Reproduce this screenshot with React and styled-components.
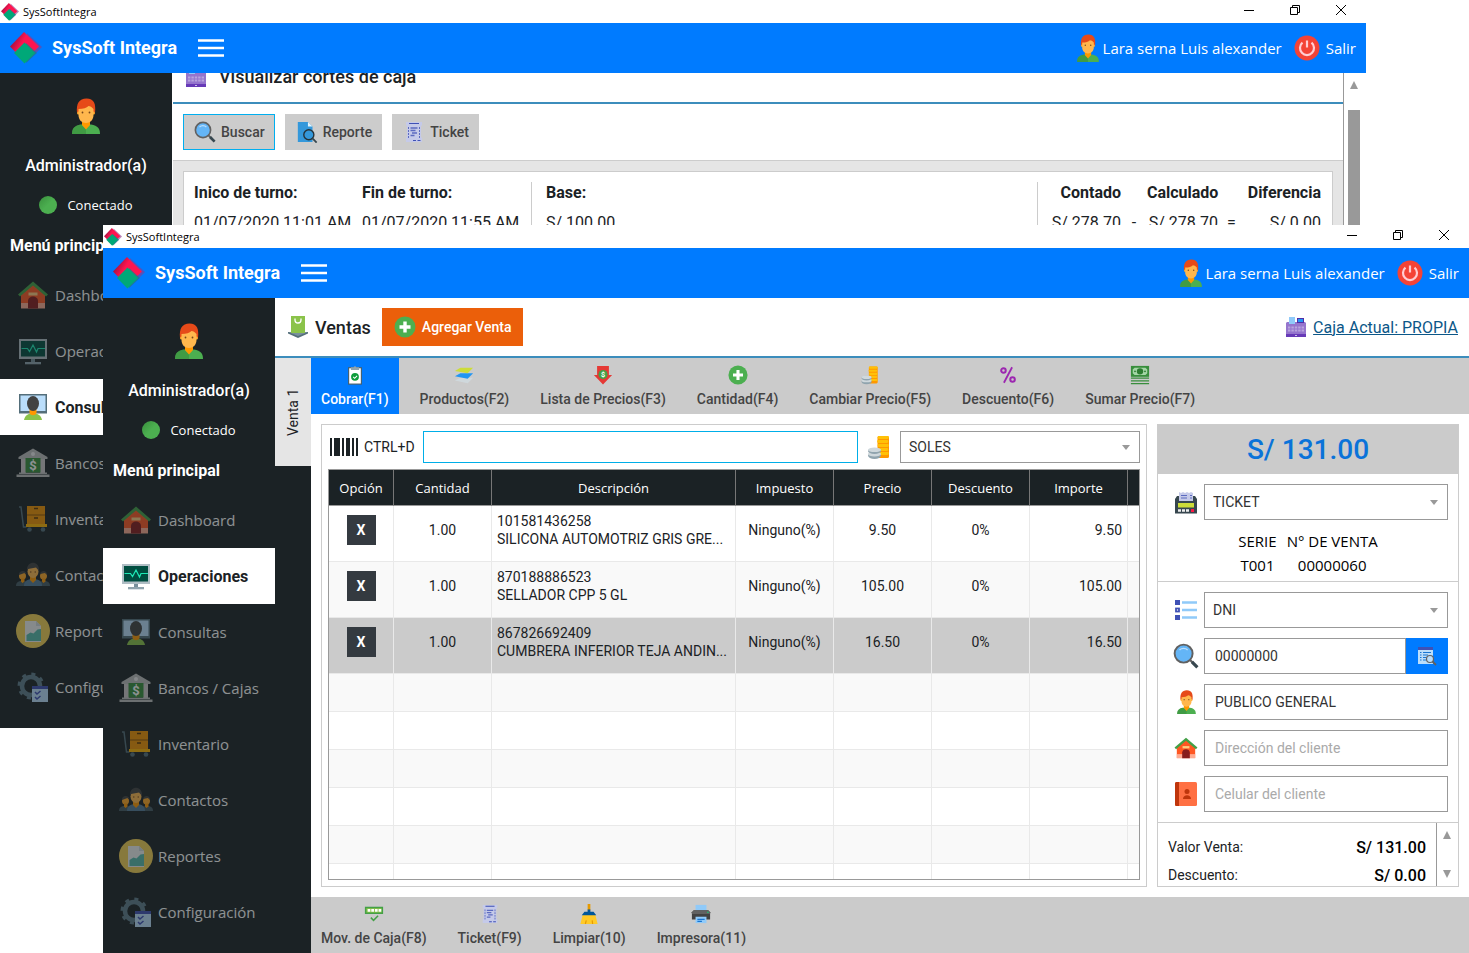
import { useId } from "react";
import styled, { createGlobalStyle } from "styled-components";

const SEGOE = `"Open Sans", "Noto Sans", sans-serif`;
const ROBOTO = `Roboto, "Liberation Sans", sans-serif`;

const products = [
    { code: "101581436258", name: "SILICONA AUTOMOTRIZ GRIS GRE...", qty: "1.00", tax: "Ninguno(%)", price: "9.50", discount: "0%", total: "9.50" },
    { code: "870188886523", name: "SELLADOR CPP 5 GL", qty: "1.00", tax: "Ninguno(%)", price: "105.00", discount: "0%", total: "105.00" },
    { code: "867826692409", name: "CUMBRERA INFERIOR TEJA ANDIN...", qty: "1.00", tax: "Ninguno(%)", price: "16.50", discount: "0%", total: "16.50", selected: true },
];

const emptyRows = [0, 1, 2, 3, 4, 5];

const menu = [
    { label: "Dashboard", icon: HouseIcon },
    { label: "Operaciones", icon: MonitorIcon },
    { label: "Consultas", icon: PresenterIcon },
    { label: "Bancos / Cajas", icon: BankIcon },
    { label: "Inventario", icon: TrolleyIcon },
    { label: "Contactos", icon: PeopleIcon },
    { label: "Reportes", icon: ReportsIcon },
    { label: "Configuración", icon: SettingsIcon },
];

const topTools = [
    { label: "Cobrar(F1)", icon: ClipboardIcon, primary: true },
    { label: "Productos(F2)", icon: LayersIcon },
    { label: "Lista de Precios(F3)", icon: PriceDownIcon },
    { label: "Cantidad(F4)", icon: PlusIcon },
    { label: "Cambiar Precio(F5)", icon: CoinsIcon },
    { label: "Descuento(F6)", icon: PercentIcon },
    { label: "Sumar Precio(F7)", icon: CashIcon },
];

const bottomTools = [
    { label: "Mov. de Caja(F8)", icon: PinIcon },
    { label: "Ticket(F9)", icon: TicketIcon },
    { label: "Limpiar(10)", icon: BroomIcon },
    { label: "Impresora(11)", icon: PrinterIcon },
];

export default function App() {
    return (
        <Desktop>
            <GlobalStyle />
            <BackWindow>
                <WindowTop />
                <WindowBody>
                    <Sidebar active="Consultas" />
                    <CashCuts />
                </WindowBody>
            </BackWindow>
            <FrontWindow>
                <WindowTop />
                <WindowBody>
                    <Sidebar active="Operaciones" />
                    <Sales />
                </WindowBody>
            </FrontWindow>
        </Desktop>
    );
}

function WindowTop() {
    return (
        <>
            <TitleBar>
                <Logo size={18} />
                <span>SysSoftIntegra</span>
                <WindowButtons>
                    <button aria-label="Minimizar">
                        <svg width="10" height="10"><path d="M0 5.5h10" stroke="#000" /></svg>
                    </button>
                    <button aria-label="Restaurar">
                        <svg width="10" height="10" fill="none" stroke="#000"><path d="M.5 2.5h7v7h-7zM2.5 2.5v-2h7v7h-2" /></svg>
                    </button>
                    <button aria-label="Cerrar">
                        <svg width="10" height="10"><path d="M0 0l10 10M10 0L0 10" stroke="#000" /></svg>
                    </button>
                </WindowButtons>
            </TitleBar>
            <Header>
                <Logo size={32} />
                <Brand>SysSoft Integra</Brand>
                <MenuToggle aria-label="Menú">
                    <svg width="26" height="20"><path d="M0 2.5h26M0 10h26M0 17.5h26" stroke="#fff" strokeWidth="2.4" /></svg>
                </MenuToggle>
                <Session>
                    <PersonIcon size={28} />
                    <span>Lara serna Luis alexander</span>
                    <button>
                        <PowerIcon size={26} />
                        Salir
                    </button>
                </Session>
            </Header>
        </>
    );
}

function Sidebar({ active }) {
    return (
        <SideMenu>
            <Avatar>
                <PersonIcon size={36} />
            </Avatar>
            <Role>Administrador(a)</Role>
            <Status>
                <Dot />
                Conectado
            </Status>
            <MenuTitle>Menú principal</MenuTitle>
            {menu.map(({ label, icon: MenuIcon }) => (
                <MenuItem key={label} href="#" $active={label === active}>
                    <MenuIcon size={34} />
                    {label}
                </MenuItem>
            ))}
        </SideMenu>
    );
}

function CashCuts() {
    return (
        <ScrollArea>
            <CutsContent>
                <CutsTitle>
                    <RegisterIcon size={20} />
                    Visualizar cortes de caja
                </CutsTitle>
                <CutsButtons>
                    <GrayButton $focused><SearchIcon size={22} />Buscar</GrayButton>
                    <GrayButton><ReportSearchIcon size={22} />Reporte</GrayButton>
                    <GrayButton><TicketIcon size={22} />Ticket</GrayButton>
                </CutsButtons>
                <CutsBody>
                    <CutsCard>
                        <Shift>
                            <strong>Inico de turno:</strong>
                            <strong>Fin de turno:</strong>
                            <span>01/07/2020 11:01 AM</span>
                            <span>01/07/2020 11:55 AM</span>
                        </Shift>
                        <Base>
                            <strong>Base:</strong>
                            <span>S/ 100.00</span>
                        </Base>
                        <Totals>
                            <strong>Contado</strong>
                            <i />
                            <strong>Calculado</strong>
                            <i />
                            <strong>Diferencia</strong>
                            <span>S/ 278.70</span>
                            <i>-</i>
                            <span>S/ 278.70</span>
                            <i>=</i>
                            <span>S/ 0.00</span>
                        </Totals>
                    </CutsCard>
                </CutsBody>
            </CutsContent>
            <ScrollBar>
                <Arrow />
                <Thumb />
            </ScrollBar>
        </ScrollArea>
    );
}

function Sales() {
    return (
        <SalesPage>
            <SalesHeader>
                <BagIcon size={22} />
                <h1>Ventas</h1>
                <AddSale><PlusIcon size={22} />Agregar Venta</AddSale>
                <CashLink href="#">
                    <RegisterIcon size={20} />
                    <span>Caja Actual: PROPIA</span>
                </CashLink>
            </SalesHeader>
            <SalesBody>
                <TabStrip>
                    <Tab>Venta 1</Tab>
                </TabStrip>
                <SaleTab>
                    <Toolbar items={topTools} />
                    <Panels>
                        <ProductPanel />
                        <PayPanel />
                    </Panels>
                    <Toolbar items={bottomTools} />
                </SaleTab>
            </SalesBody>
        </SalesPage>
    );
}

function Toolbar({ items }) {
    return (
        <ToolRow>
            {items.map(({ label, icon: ToolIcon, primary }) => (
                <Tool key={label} $primary={primary}>
                    <ToolIcon size={20} />
                    {label}
                </Tool>
            ))}
        </ToolRow>
    );
}

function ProductPanel() {
    return (
        <ProductBox>
            <SearchRow>
                <BarcodeIcon />
                <label htmlFor="code">CTRL+D</label>
                <CodeInput id="code" />
                <CoinsIcon size={26} />
                <Money>
                    <select aria-label="Moneda"><option>SOLES</option></select>
                </Money>
            </SearchRow>
            <TableFrame>
                <Table>
                    <colgroup>
                        <col width="65" />
                        <col width="98" />
                        <col />
                        <col width="98" />
                        <col width="98" />
                        <col width="98" />
                        <col width="98" />
                        <col width="11" />
                    </colgroup>
                    <thead>
                        <tr>
                            <th>Opción</th>
                            <th>Cantidad</th>
                            <th>Descripción</th>
                            <th>Impuesto</th>
                            <th>Precio</th>
                            <th>Descuento</th>
                            <th>Importe</th>
                            <th />
                        </tr>
                    </thead>
                    <tbody>
                        {products.map((p) => (
                            <Row key={p.code} $selected={p.selected}>
                                <td><Remove>X</Remove></td>
                                <td>{p.qty}</td>
                                <NameCell>{p.code}<br />{p.name}</NameCell>
                                <td>{p.tax}</td>
                                <td>{p.price}</td>
                                <td>{p.discount}</td>
                                <TotalCell>{p.total}</TotalCell>
                                <td />
                            </Row>
                        ))}
                        {emptyRows.map((n) => (
                            <EmptyRow key={n}>
                                <td /><td /><td /><td /><td /><td /><td /><td />
                            </EmptyRow>
                        ))}
                    </tbody>
                </Table>
            </TableFrame>
        </ProductBox>
    );
}

function PayPanel() {
    return (
        <PayBox>
            <Amount>S/ 131.00</Amount>
            <Section>
                <Field>
                    <ReceiptPrinterIcon size={24} />
                    <SelectBox>
                        <select aria-label="Comprobante"><option>TICKET</option></select>
                    </SelectBox>
                </Field>
                <Serie>
                    <span>SERIE</span>
                    <span>N° DE VENTA</span>
                    <span>T001</span>
                    <span>00000060</span>
                </Serie>
            </Section>
            <Section>
                <Field>
                    <ListIcon size={24} />
                    <SelectBox>
                        <select aria-label="Tipo de documento"><option>DNI</option></select>
                    </SelectBox>
                </Field>
                <Field>
                    <SearchIcon size={26} />
                    <InputGroup>
                        <TextInput aria-label="Número de documento" defaultValue="00000000" />
                        <LookupButton aria-label="Buscar cliente"><ListSearchIcon size={20} /></LookupButton>
                    </InputGroup>
                </Field>
                <Field>
                    <PersonIcon size={24} />
                    <TextInput aria-label="Nombre del cliente" defaultValue="PUBLICO GENERAL" />
                </Field>
                <Field>
                    <HouseIcon size={26} />
                    <TextInput aria-label="Dirección" placeholder="Dirección del cliente" />
                </Field>
                <Field>
                    <AgendaIcon size={24} />
                    <TextInput aria-label="Celular" placeholder="Celular del cliente" />
                </Field>
            </Section>
            <Summary>
                <SummaryList>
                    <dt>Valor Venta:</dt>
                    <dd>S/ 131.00</dd>
                    <dt>Descuento:</dt>
                    <dd>S/ 0.00</dd>
                </SummaryList>
                <SummaryScroll>
                    <Arrow />
                    <Arrow $down />
                </SummaryScroll>
            </Summary>
        </PayBox>
    );
}

/* icons */

function Logo({ size }) {
    const id = useId();
    return (
        <Icon width={size} height={size} viewBox="0 0 32 32">
            <defs>
                <linearGradient id={id} x1="0" y1="0.3" x2="0.7" y2="0.7">
                    <stop offset="0" stopColor="#8e0f3c" />
                    <stop offset="0.5" stopColor="#ff1550" />
                </linearGradient>
            </defs>
            <path d="M17 1l15 14-15 15z" fill="#8a3a8c" opacity=".6" />
            <path d="M14 0l15 14.500-15 14.500L0 14.500z" fill={`url(#${id})`} />
            <path d="M16 11l11 10-11 10z" fill="#0f7f92" opacity=".7" />
            <path d="M14.500 10.500L25 21 14.500 31.500 4 21z" fill="#00a878" />
        </Icon>
    );
}

function PersonIcon({ size }) {
    return (
        <Icon width={Math.round(size * 0.78)} height={size} viewBox="0 0 28 36">
            <path d="M0 36c0-5 2-8.500 9-9.500h10c7 1 9 4.500 9 9.500z" fill="#4caf50" />
            <path d="M0 36c0-5 2-8.500 9-9.500l5 5V36z" fill="#388e3c" opacity=".6" />
            <path d="M10 21h8v6l-4 4.500-4-4.500z" fill="#ff9800" />
            <path d="M5 14.500C4 6 7 .5 14.500.5S24 6 23 14.500z" fill="#e64a19" />
            <circle cx="6.500" cy="15" r="1.500" fill="#ffa726" />
            <circle cx="21.500" cy="15" r="1.500" fill="#ffa726" />
            <path d="M6.500 11c5 0 8-1 10-3 2 0 3 1 5 3v6c0 5-3.500 8-7.500 8s-7.500-3-7.500-8z" fill="#ffb74d" />
            <circle cx="10.500" cy="14.500" r=".9" fill="#784719" />
            <circle cx="17.500" cy="14.500" r=".9" fill="#784719" />
        </Icon>
    );
}

function PowerIcon({ size }) {
    return (
        <Icon width={size} height={size} viewBox="0 0 26 26">
            <circle cx="13" cy="13" r="12.5" fill="#f44336" />
            <path d="M8.500 7.700a7 7 0 1 0 9 0M13 5.500v7" fill="none" stroke="#ffcdd2" strokeWidth="2.2" />
        </Icon>
    );
}

function HouseIcon({ size }) {
    return (
        <Icon width={size} height={size} viewBox="0 0 34 34">
            <path d="M5 16L17 6l12 10v14H5z" fill="#ff5722" />
            <path d="M5 25h24v5.500H5z" fill="#ffab91" />
            <path d="M17 3.500L2 16.500l2 2 13-11 13 11 2-2z" fill="#43a047" />
            <path d="M12 30.500V23c0-6 10-6 10 0v7.500z" fill="#871c1c" />
            <rect x="12.500" y="14.500" width="9" height="3" fill="#ffcc80" />
        </Icon>
    );
}

function MonitorIcon({ size }) {
    return (
        <Icon width={size} height={size} viewBox="0 0 34 34">
            <path d="M15 24h4v5h-4z" fill="#78909c" />
            <rect x="9" y="28" width="16" height="2.3" fill="#90a4ae" />
            <rect x="3" y="5" width="28" height="20" fill="#b0bec5" />
            <rect x="5" y="7" width="24" height="15.5" fill="#004d40" />
            <path d="M5.500 14.500h6l2 3 3.500-6.500 3.500 7 1.500-3.500h7" fill="none" stroke="#1de9b6" strokeWidth="1.2" />
        </Icon>
    );
}

function PresenterIcon({ size }) {
    return (
        <Icon width={size} height={size} viewBox="0 0 34 34">
            <rect x="3" y="4" width="28" height="19.5" fill="#546e7a" />
            <rect x="4.500" y="5.500" width="25" height="15.5" fill="#bbdefb" />
            <path d="M8 30c1-5 4-6.500 9-6.500s8 1.500 9 6.500z" fill="#8bc34a" />
            <path d="M13.500 19h7v4c-1 3-6 3-7 0z" fill="#ff9800" />
            <ellipse cx="17" cy="13.5" rx="6" ry="7.500" fill="#424242" />
        </Icon>
    );
}

function BankIcon({ size }) {
    return (
        <Icon width={size} height={size} viewBox="0 0 34 34">
            <path d="M17 2.500L31.500 11v2h-29v-2z" fill="#bdbdbd" />
            <circle cx="17" cy="8" r="2" fill="#eee" />
            <path d="M5 13h5v14H5zM24 13h5v14h-5z" fill="#cfcaca" />
            <path d="M3 26.500h28V28H3zM.5 28.500h33V31H.5z" fill="#bdbdbd" />
            <rect x="9.500" y="12" width="15" height="14.5" fill="#388e3c" />
            <text x="17" y="24" textAnchor="middle" fontSize="13" fontWeight="700" fontFamily="Roboto" fill="#fff">$</text>
        </Icon>
    );
}

function TrolleyIcon({ size }) {
    return (
        <Icon width={size} height={size} viewBox="0 0 34 34">
            <path d="M3 5h2l2.500 20h3" fill="none" stroke="#546e7a" strokeWidth="1.5" />
            <rect x="11" y="4" width="18" height="18" fill="#f09200" />
            <path d="M11 13h18" stroke="#8d5300" />
            <path d="M18 6.500h4M18 16h4" stroke="#5d3700" strokeWidth="1.5" />
            <rect x="10" y="22" width="21" height="3" fill="#ffb300" />
            <circle cx="13.500" cy="27.500" r="2.300" fill="#546e7a" />
            <circle cx="27" cy="27.500" r="2.300" fill="#546e7a" />
        </Icon>
    );
}

function PeopleIcon({ size }) {
    return (
        <Icon width={size} height={size} viewBox="0 0 34 34">
            <path d="M0 28c0-3.500 2-5 6-5s5 2 5 5zM23 28c0-3 1-5 5-5s6 1.500 6 5z" fill="#455a64" />
            <path d="M8 28c0-5 3-7 9-7s9 2 9 7z" fill="#547b98" />
            <circle cx="6.500" cy="18" r="3.500" fill="#ffa726" />
            <circle cx="27.500" cy="18" r="3.500" fill="#ffa726" />
            <path d="M3 17c-.5-5 7-5 7.500-1l-2-1zM24 16c.5-4 7.500-4 7 1l-2-2z" fill="#424242" />
            <path d="M5 20.500h3.500v3L6.500 25 5 23.500zM26 20.500h3.500v3L27.500 25 26 23.500z" fill="#ff9800" />
            <path d="M14 18h6v4l-3 3-3-3z" fill="#ff9800" />
            <ellipse cx="17" cy="13.500" rx="5.500" ry="6.500" fill="#ffb74d" />
            <path d="M11 13c-1-11 13-11 12 0l-3-3.500-8 1.500z" fill="#424242" />
            <circle cx="14.800" cy="14" r=".7" fill="#784719" />
            <circle cx="19.200" cy="14" r=".7" fill="#784719" />
        </Icon>
    );
}

function ReportsIcon({ size }) {
    return (
        <Icon width={size} height={size} viewBox="0 0 34 34">
            <circle cx="17" cy="17" r="17" fill="#f3cf53" />
            <path d="M9 7h11l5 5v16H9z" fill="#f1f1f1" />
            <path d="M20 7l5 5h-5z" fill="#cfd8dc" />
            <path d="M10.500 21l4-2.500 3 1 4-4 3.500-.5v12H10.500z" fill="#57b9ab" />
        </Icon>
    );
}

function SettingsIcon({ size }) {
    return (
        <Icon width={size} height={size} viewBox="0 0 34 34">
            <circle cx="15" cy="16" r="9" fill="none" stroke="#607d8b" strokeWidth="4.5" />
            <circle cx="15" cy="16" r="12" fill="none" stroke="#607d8b" strokeWidth="3" strokeDasharray="4 5.42" />
            <rect x="16" y="17" width="16" height="15" fill="#bbdefb" />
            <rect x="16" y="16" width="16" height="3" fill="#3f51b5" />
            <path d="M19 22l2 2 3.500-3M19 27l2 2 3.500-3" fill="none" stroke="#3f51b5" strokeWidth="1.5" />
        </Icon>
    );
}

function RegisterIcon({ size }) {
    return (
        <Icon width={size} height={size} viewBox="0 0 20 20">
            <path d="M0 6l1-1h18l1 1v11H0z" fill="#9575cd" />
            <rect x="3" width="6" height="7" fill="#90caf9" />
            <rect x="11" y="1" width="7" height="5" fill="#512da8" />
            <rect x="12" y="2" width="5" height="3" fill="#2196f3" />
            <path d="M2 10.500h16M2 13.500h16" stroke="#b9a5de" strokeWidth="2" strokeDasharray="2.4 1" />
            <rect y="17" width="20" height="3" fill="#673ab7" />
            <rect x="9" y="18" width="2" height="1" fill="#d1c4e9" />
        </Icon>
    );
}

function BagIcon({ size }) {
    return (
        <Icon width={size} height={size} viewBox="0 0 22 22">
            <path d="M1 16h20v1.500L11 22 1 17.500z" fill="#546e7a" />
            <path d="M1 16h20l-10 4z" fill="#78909c" />
            <rect x="4" width="14" height="17" fill="#8bc34a" />
            <path d="M8 2.500V4c0 4 6 4 6 0V2.500" fill="none" stroke="#fff" strokeWidth="1.3" />
        </Icon>
    );
}

function PlusIcon({ size }) {
    return (
        <Icon width={size} height={size} viewBox="0 0 22 22">
            <circle cx="11" cy="11" r="10.5" fill="#4caf50" />
            <path d="M11 5.500v11M5.500 11h11" stroke="#fff" strokeWidth="3.4" />
        </Icon>
    );
}

function SearchIcon({ size }) {
    return (
        <Icon width={size} height={size} viewBox="0 0 24 24">
            <path d="M15.500 15.500l3 3" stroke="#616161" strokeWidth="2" />
            <path d="M17.500 17.500l5 5" stroke="#37474f" strokeWidth="3" />
            <circle cx="9.800" cy="9.800" r="8.300" fill="#64b5f6" stroke="#616161" strokeWidth="1.8" />
            <path d="M6 6.500c2-2 5.500-2 7.500 0" fill="none" stroke="#bbdefb" strokeWidth="1.3" />
        </Icon>
    );
}

function ReportSearchIcon({ size }) {
    return (
        <Icon width={size} height={size} viewBox="0 0 22 24">
            <path d="M1 1h11l5 5v17H1z" fill="#3498db" />
            <path d="M12 1l5 5h-5z" fill="#e1f5fe" />
            <circle cx="13" cy="15" r="5.500" fill="#3498db" stroke="#263238" strokeWidth="1.5" />
            <path d="M17 19l4.500 4.500" stroke="#37474f" strokeWidth="2" />
        </Icon>
    );
}

function TicketIcon({ size }) {
    return (
        <Icon width={size} height={size} viewBox="0 0 22 22">
            <path d="M3 1h16v3l-1 1v11l1 1v4H3v-4l1-1V5L3 4z" fill="#c5cae9" />
            <path d="M6 2.500h10M10 19.500h3M14.500 19.500h3" stroke="#3f51b5" strokeWidth="1.2" />
            <path d="M5.500 6v11M16.500 6v11" stroke="#5c6bc0" strokeDasharray="2 1" />
            <path d="M7.500 7h7M7.500 9.500h5M9 12h5M7.500 14.500h4" stroke="#5c6bc0" strokeWidth="1.5" />
        </Icon>
    );
}

function ClipboardIcon({ size }) {
    return (
        <Icon width={size} height={size} viewBox="0 0 22 22">
            <rect x="4" y="3" width="14" height="18" fill="#fff" stroke="#455a64" strokeWidth="1.2" />
            <path d="M6.500 2.500h3a1.600 1.600 0 0 1 3 0h3v3h-9z" fill="#90a4ae" />
            <circle cx="11" cy="13" r="4.300" fill="#0f9d3c" />
            <path d="M9 13l1.600 1.600L13.300 12" fill="none" stroke="#fff" strokeWidth="1.2" />
        </Icon>
    );
}

function LayersIcon({ size }) {
    return (
        <Icon width={size} height={size} viewBox="0 0 22 22">
            <path d="M1 17l6-3h14l-6 6z" fill="#cfd8dc" />
            <path d="M1 12.500l6-3.500h14l-6 6z" fill="#2196f3" />
            <path d="M1 6.500L7 3h14l-6 6z" fill="#cddc39" />
        </Icon>
    );
}

function PriceDownIcon({ size }) {
    return (
        <Icon width={size} height={size} viewBox="0 0 22 22">
            <path d="M4.500 1h13v10H21L11 21.500 1 11h3.500z" fill="#e53935" />
            <circle cx="11" cy="10.500" r="5" fill="#43a047" />
            <text x="11" y="13.500" textAnchor="middle" fontSize="8" fontFamily="Roboto" fontWeight="700" fill="#fff">$</text>
        </Icon>
    );
}

function CoinsIcon({ size }) {
    return (
        <Icon width={size} height={size} viewBox="0 0 26 26">
            <rect x="11.500" y="2" width="11.500" height="22" rx="1.500" fill="#ff9800" />
            <path d="M13 3.500h8.500M12.500 7.500h8.500M13 11.500h8.500M12.500 15.500h8.500M13 19.500h8.500" stroke="#ffc107" strokeWidth="2.800" strokeLinecap="round" />
            <ellipse cx="8.500" cy="21.500" rx="6.500" ry="3.500" fill="#90a4ae" />
            <ellipse cx="8.500" cy="20" rx="6.500" ry="2.500" fill="#cfd8dc" />
            <ellipse cx="8.500" cy="17" rx="6.500" ry="3" fill="#90a4ae" />
            <ellipse cx="8.500" cy="15.800" rx="6.500" ry="2.300" fill="#cfd8dc" />
        </Icon>
    );
}

function PercentIcon({ size }) {
    return (
        <Icon width={size} height={size} viewBox="0 0 22 22">
            <path d="M15.500 2.500l-9 17" stroke="#9c27b0" strokeWidth="2" />
            <circle cx="6" cy="6" r="2.500" fill="none" stroke="#9c27b0" strokeWidth="2.200" />
            <circle cx="16" cy="16" r="2.500" fill="none" stroke="#9c27b0" strokeWidth="2.200" />
        </Icon>
    );
}

function CashIcon({ size }) {
    return (
        <Icon width={size} height={size} viewBox="0 0 22 22">
            <rect x="1" y="1" width="20" height="12" fill="#388e3c" />
            <path d="M5 3h12l2 2v4l-2 2H5L3 9V5z" fill="#a5d6a7" />
            <circle cx="11" cy="7" r="3.500" fill="#2e7d32" />
            <circle cx="5.500" cy="7" r="1" fill="#2e7d32" />
            <circle cx="16.500" cy="7" r="1" fill="#2e7d32" />
            <path d="M1 14.500h20M1 17.500h20M1 20.500h20" stroke="#388e3c" strokeWidth="1.5" />
        </Icon>
    );
}

function PinIcon({ size }) {
    return (
        <Icon width={size} height={size} viewBox="0 0 22 22">
            <rect x="1.800" y="3.800" width="18.400" height="6.400" fill="#8bc34a" stroke="#43a047" strokeWidth="1.6" />
            <path d="M4 7h15" stroke="#fff" strokeWidth="3" strokeDasharray="3 1" />
            <path d="M7.500 15l3 3 5-5" fill="none" stroke="#43a047" strokeWidth="1.6" />
        </Icon>
    );
}

function BroomIcon({ size }) {
    return (
        <Icon width={size} height={size} viewBox="0 0 22 22">
            <path d="M9.500 0h3v7h-3z" fill="#e69a00" />
            <path d="M9.500 6h3v4h-3z" fill="#01579b" />
            <path d="M4 12h14l2.500 10h-19z" fill="#ffca28" />
            <path d="M6 8.500h10l3 4H3z" fill="#01579b" />
            <path d="M7 22l1-4M15 22l-.5-4" stroke="#e69a00" strokeWidth="1.3" />
        </Icon>
    );
}

function PrinterIcon({ size }) {
    return (
        <Icon width={size} height={size} viewBox="0 0 22 22">
            <rect x="5" y="1" width="12" height="7" fill="#90caf9" />
            <path d="M1 9l2-2h16l2 2v8H1z" fill="#424242" />
            <path d="M1 9l2-2h16l2 2v2H1z" fill="#616161" />
            <rect x="18" y="8.500" width="1.300" height="1.300" fill="#00e676" />
            <rect x="5" y="14" width="12" height="7" fill="#90caf9" />
            <path d="M7 17h8M7 19.200h5" stroke="#1976d2" strokeWidth="1.3" />
        </Icon>
    );
}

function ReceiptPrinterIcon({ size }) {
    return (
        <Icon width={size} height={size} viewBox="0 0 24 24">
            <path d="M1 9l2-3h18l2 3v14.500H1z" fill="#37474f" />
            <path d="M5 2l2 1 2-1 2 1 2-1 2 1 2-1 2 1v8H5z" fill="#c5cae9" />
            <path d="M7 5.500h6M16 5.500h2M7 8h6M16 8h2" stroke="#5c6bc0" strokeWidth="1.2" />
            <rect x="4" y="13" width="16" height="4.500" fill="#cddc39" />
            <path d="M4 20.500h11.500" stroke="#eee" strokeWidth="2.4" strokeDasharray="3 1" />
            <rect x="17" y="19" width="3" height="3" fill="#ff1744" />
        </Icon>
    );
}

function ListIcon({ size }) {
    return (
        <Icon width={size} height={size} viewBox="0 0 24 24">
            <path d="M1 2h5v5H1zM1 17h5v5H1z" fill="#3f51b5" />
            <rect x="2" y="10.500" width="3" height="3" fill="#fff" stroke="#3f51b5" strokeWidth="1.8" />
            <path d="M8 4.500h15M8 12h15M8 19.500h15" stroke="#90caf9" strokeWidth="2.4" />
        </Icon>
    );
}

function AgendaIcon({ size }) {
    return (
        <Icon width={size} height={size} viewBox="0 0 24 24">
            <rect x="1" width="22" height="24" rx="1.5" fill="#ff7043" />
            <path d="M5 0v24H2.500A1.500 1.500 0 0 1 1 22.500v-21A1.500 1.500 0 0 1 2.500 0z" fill="#bf360c" />
            <circle cx="13" cy="9.500" r="2.500" fill="#bf360c" />
            <path d="M9 17c0-5 8-5 8 0z" fill="#bf360c" />
        </Icon>
    );
}

function ListSearchIcon({ size }) {
    return (
        <Icon width={size} height={size} viewBox="0 0 20 20">
            <rect x="1" y="1" width="15" height="17" fill="#bbdefb" />
            <rect x="1" y="1" width="15" height="3" fill="#3f51b5" />
            <path d="M3 6.500h1.500M3 9h1.500M3 11.500h1.500M3 14h1.500M6 6.500h8M6 9h5M6 11.500h3M6 14h3" stroke="#1976d2" strokeWidth="1.2" />
            <path d="M15.500 15.500l3.500 3.500" stroke="#616161" strokeWidth="1.8" />
            <circle cx="13" cy="13" r="3.500" fill="#bbdefb" stroke="#616161" strokeWidth="1.2" />
        </Icon>
    );
}

function BarcodeIcon() {
    return (
        <Icon width="28" height="18" viewBox="0 0 28 18">
            <path d="M0 0h2v18H0zM4 0h6v18H4zM12 0h2v18h-2zM16 0h4v18h-4zM22 0h2v18h-2zM26 0h2v18h-2z" fill="#1b2225" />
        </Icon>
    );
}

/* styles */

const GlobalStyle = createGlobalStyle`
    * {
        box-sizing: border-box;
    }
    body {
        margin: 0;
        background-color: #fff;
        color: #1b2225;
        font-family: ${ROBOTO};
        font-size: 14px;
    }
    button, input, select {
        margin: 0;
        border: none;
        border-radius: 0;
        font: inherit;
        color: inherit;
    }
    button {
        padding: 0;
        background: none;
        cursor: pointer;
    }
    a {
        color: inherit;
        text-decoration: none;
    }
    h1, h2, dl, dd {
        margin: 0;
    }
`;

const Icon = styled.svg`
    display: block;
    flex-shrink: 0;
`;

const Desktop = styled.div`
    position: relative;
    height: 100vh;
    min-height: 900px;
    overflow: hidden;
`;

const Window = styled.section`
    position: absolute;
    display: flex;
    flex-direction: column;
    background-color: #fff;
    overflow: hidden;
`;

const BackWindow = styled(Window)`
    inset: 0 103px 225px 0;
`;

const FrontWindow = styled(Window)`
    inset: 225px 0 0 103px;
`;

const TitleBar = styled.div`
    height: 23px;
    flex-shrink: 0;
    display: flex;
    align-items: center;
    gap: 4px;
    padding: 0 2px 0 1px;
    font-family: ${SEGOE};
    font-size: 11px;
    color: #000;
`;

const WindowButtons = styled.div`
    display: flex;
    margin-left: auto;
    align-self: flex-start;
    button {
        width: 46px;
        height: 20px;
        display: flex;
        align-items: center;
        justify-content: center;
    }
`;

const Header = styled.header`
    height: 50px;
    flex-shrink: 0;
    display: flex;
    align-items: center;
    padding: 0 10px;
    background-color: #007bff;
    color: #fff;
`;

const Brand = styled.h1`
    margin-left: 10px;
    font-size: 18px;
    font-weight: 700;
    line-height: 22px;
`;

const MenuToggle = styled.button`
    display: flex;
    margin-left: 21px;
`;

const Session = styled.div`
    margin-left: auto;
    display: flex;
    align-items: center;
    gap: 4px;
    font-family: ${SEGOE};
    font-size: 15px;
    button {
        display: flex;
        align-items: center;
        gap: 6px;
        margin-left: 8px;
    }
`;

const WindowBody = styled.div`
    flex: 1;
    min-height: 0;
    display: flex;
`;

const SideMenu = styled.nav`
    width: 172px;
    flex-shrink: 0;
    overflow: hidden;
    background-color: #1b2225;
    color: #fff;
`;

const Avatar = styled.div`
    display: flex;
    justify-content: center;
    padding: 25px 0 11px;
`;

const Role = styled.div`
    line-height: 42px;
    text-align: center;
    font-size: 16px;
    font-weight: 500;
`;

const Status = styled.div`
    height: 36px;
    display: flex;
    align-items: center;
    justify-content: center;
    gap: 10px;
    font-family: ${SEGOE};
    font-size: 13px;
`;

const Dot = styled.span`
    width: 18px;
    height: 18px;
    border-radius: 50%;
    background: linear-gradient(135deg, #388e3c, #4caf50 50%);
`;

const MenuTitle = styled.h2`
    padding: 2px 0 0 10px;
    line-height: 42px;
    font-size: 16px;
    font-weight: 700;
`;

const MenuItem = styled.a`
    height: 56px;
    display: flex;
    align-items: center;
    gap: 5px;
    padding-left: 16px;
    font-family: ${(props) => (props.$active ? ROBOTO : SEGOE)};
    font-size: ${(props) => (props.$active ? "16px" : "15px")};
    font-weight: ${(props) => (props.$active ? 700 : 400)};
    color: ${(props) => (props.$active ? "#1b2225" : "#fff")};
    background-color: ${(props) => (props.$active ? "#fff" : "transparent")};
    white-space: nowrap;
    opacity: ${(props) => (props.$active ? 1 : 0.5)};
`;

const ScrollArea = styled.main`
    flex: 1;
    min-width: 0;
    display: flex;
    margin-left: 1px;
    overflow: hidden;
`;

const CutsContent = styled.div`
    flex: 1;
    display: flex;
    flex-direction: column;
`;

const CutsTitle = styled.h2`
    height: 53px;
    flex-shrink: 0;
    margin-top: -22px;
    display: flex;
    align-items: center;
    gap: 13px;
    padding-left: 13px;
    border-bottom: 2px solid #3c8dbc;
    font-size: 18px;
    font-weight: 500;
`;

const CutsButtons = styled.div`
    display: flex;
    gap: 10px;
    padding: 10px;
    border-bottom: 1px solid #ccc;
`;

const GrayButton = styled.button`
    height: 36px;
    display: flex;
    align-items: center;
    gap: 5px;
    padding: 0 9px 0 10px;
    border: 1px solid ${(props) => (props.$focused ? "#00aeef" : "#ccc")};
    background-color: #ccc;
    color: #444;
    font-weight: 500;
`;

const CutsBody = styled.div`
    flex: 1;
    display: flex;
    padding: 10px;
    background-color: #e5e5e5;
`;

const CutsCard = styled.div`
    flex: 1;
    display: flex;
    padding: 10px 11px 10px 10px;
    border: 1px solid #ccc;
    background-color: #fff;
    font-size: 16px;
    line-height: 22px;
    white-space: nowrap;
`;

const Shift = styled.div`
    display: grid;
    grid-template-columns: 158px 158px;
    grid-auto-rows: 22px;
    gap: 8px 10px;
    padding-right: 11px;
`;

const Base = styled.div`
    display: grid;
    grid-auto-rows: 22px;
    gap: 8px;
    padding-left: 14px;
    border-left: 1px solid #ccc;
`;

const Totals = styled.div`
    display: grid;
    grid-template-columns: 70px 8px 71px 8px 77px;
    grid-auto-rows: 22px;
    gap: 8px 9px;
    margin-left: auto;
    padding-left: 13px;
    border-left: 1px solid #ccc;
    text-align: right;
    i {
        font-style: normal;
        text-align: center;
    }
`;

const ScrollBar = styled.div`
    width: 23px;
    display: flex;
    flex-direction: column;
    align-items: center;
    gap: 21px;
    padding: 8px 2px 0 0;
    border-left: 1px solid #999;
`;

const Arrow = styled.span`
    border: 4px solid transparent;
    border-top: ${(props) => (props.$down ? "8px solid #999" : "none")};
    border-bottom: ${(props) => (props.$down ? "none" : "8px solid #999")};
`;

const Thumb = styled.span`
    flex: 1;
    width: 12px;
    background-color: #999;
`;

const SalesPage = styled.main`
    flex: 1;
    min-width: 0;
    display: flex;
    flex-direction: column;
`;

const SalesHeader = styled.div`
    height: 60px;
    display: flex;
    align-items: center;
    padding: 0 11px 0 12px;
    border-bottom: 2px solid #3c8dbc;
    h1 {
        margin: 0 11px 0 6px;
        font-size: 18px;
        font-weight: 500;
    }
`;

const AddSale = styled.button`
    height: 38px;
    display: flex;
    align-items: center;
    gap: 6px;
    padding: 0 11px 0 12px;
    background-color: #eb5f0a;
    color: #fff;
    font-weight: 500;
`;

const CashLink = styled.a`
    margin-left: auto;
    display: flex;
    align-items: center;
    gap: 7px;
    font-size: 16px;
    color: #0c5788;
    span {
        text-decoration: underline;
    }
`;

const SalesBody = styled.div`
    flex: 1;
    min-height: 0;
    display: flex;
`;

const TabStrip = styled.div`
    width: 36px;
    background-color: #1b2225;
`;

const Tab = styled.button`
    width: 36px;
    height: 108px;
    background-color: #e5e5e5;
    writing-mode: vertical-rl;
    transform: rotate(180deg);
`;

const SaleTab = styled.div`
    flex: 1;
    min-width: 0;
    display: flex;
    flex-direction: column;
`;

const ToolRow = styled.div`
    display: flex;
    gap: 11px;
    background-color: #cbcbcb;
`;

const Tool = styled.button`
    height: 56px;
    display: flex;
    flex-direction: column;
    align-items: center;
    gap: 6px;
    padding: 7px 10px 0;
    background-color: ${(props) => (props.$primary ? "#007bff" : "transparent")};
    color: ${(props) => (props.$primary ? "#fff" : "#444")};
    font-weight: 500;
    white-space: nowrap;
`;

const Panels = styled.div`
    flex: 1;
    min-height: 0;
    display: flex;
    gap: 10px;
    padding: 10px;
`;

const ProductBox = styled.div`
    flex: 1;
    min-width: 0;
    display: flex;
    flex-direction: column;
    gap: 6px;
    padding: 6px;
    border: 1px solid #ccc;
`;

const SearchRow = styled.div`
    display: flex;
    align-items: center;
    padding-left: 2px;
    label {
        margin: 0 8px 0 6px;
    }
`;

const CodeInput = styled.input`
    flex: 1;
    min-width: 0;
    height: 32px;
    margin-right: 8px;
    padding: 0 10px;
    border: 1px solid #00aee8;
    outline: none;
`;

const SelectBox = styled.div`
    position: relative;
    flex: 1;
    select {
        width: 100%;
        height: 36px;
        padding: 0 8px;
        appearance: none;
        border: 1px solid #999;
        background-color: #fff;
        color: #333;
    }
    &::after {
        content: "";
        position: absolute;
        right: 10px;
        top: calc(50% - 2px);
        border: 4px solid transparent;
        border-top: 5px solid #999;
        border-bottom: none;
        pointer-events: none;
    }
`;

const Money = styled(SelectBox)`
    flex: 0 0 240px;
    margin-left: 8px;
    select {
        height: 32px;
    }
`;

const TableFrame = styled.div`
    flex: 1;
    min-height: 0;
    overflow: hidden;
    border: 1px solid #999;
`;

const Table = styled.table`
    width: 100%;
    table-layout: fixed;
    border-collapse: separate;
    border-spacing: 0;
    text-align: center;
    th {
        height: 36px;
        padding: 0;
        background-color: #1b2225;
        border-right: 1px solid #777;
        border-bottom: 1px solid #999;
        color: #fff;
        font-family: ${SEGOE};
        font-size: 13px;
        font-weight: 400;
    }
    td {
        padding: 0;
        border-right: 1px solid #e9e9e9;
        border-bottom: 1px solid #e9e9e9;
    }
    th:last-child, td:last-child {
        border-right: none;
    }
    tbody tr:nth-child(even) {
        background-color: #f9f9f9;
    }
`;

const Row = styled.tr`
    background-color: ${(props) => (props.$selected ? "#cbcbcb" : "#fff")};
    td {
        height: 56px;
        padding-bottom: 8px;
    }
`;

const EmptyRow = styled.tr`
    td {
        height: 38px;
    }
`;

const NameCell = styled.td`
    && {
        padding-left: 5px;
    }
    text-align: left;
    line-height: 18px;
    white-space: nowrap;
    overflow: hidden;
`;

const TotalCell = styled.td`
    && {
        padding-right: 5px;
    }
    text-align: right;
`;

const Remove = styled.button`
    width: 29px;
    height: 30px;
    background-color: #343a40;
    color: #fff;
    font-weight: 700;
`;

const PayBox = styled.aside`
    width: 302px;
    flex-shrink: 0;
    display: flex;
    flex-direction: column;
    border: 1px solid #ccc;
`;

const Amount = styled.div`
    height: 49px;
    flex-shrink: 0;
    line-height: 49px;
    text-align: center;
    background-color: #cbcbcb;
    color: #0a73d9;
    font-size: 28px;
    font-weight: 500;
`;

const Section = styled.div`
    display: flex;
    flex-direction: column;
    gap: 10px;
    padding: 10px;
    border-bottom: 1px solid #ccc;
`;

const Field = styled.div`
    display: grid;
    grid-template-columns: 36px 1fr;
    align-items: center;
    > svg {
        justify-self: center;
    }
`;

const TextInput = styled.input`
    width: 100%;
    min-width: 0;
    height: 36px;
    padding: 0 10px;
    border: 1px solid #999;
    background-color: #fff;
    color: #333;
    outline: none;
    &::placeholder {
        color: #aaa;
    }
`;

const InputGroup = styled.div`
    display: flex;
`;

const LookupButton = styled.button`
    width: 42px;
    flex-shrink: 0;
    height: 36px;
    display: flex;
    align-items: center;
    justify-content: center;
    background-color: #007bff;
`;

const Serie = styled.div`
    display: grid;
    grid-template-columns: auto auto;
    grid-auto-rows: 24px;
    justify-content: center;
    justify-items: center;
    column-gap: 10px;
    height: 41px;
    line-height: 22px;
    font-family: ${SEGOE};
    font-size: 15px;
    color: #000;
`;

const Summary = styled.div`
    flex: 1;
    min-height: 0;
    display: flex;
    overflow: hidden;
`;

const SummaryList = styled.dl`
    flex: 1;
    display: grid;
    grid-template-columns: auto auto;
    grid-auto-rows: 28px;
    align-items: center;
    padding: 10px;
    dd {
        text-align: right;
        font-size: 16px;
        font-weight: 500;
        color: #000;
    }
`;

const SummaryScroll = styled.div`
    width: 22px;
    display: flex;
    flex-direction: column;
    align-items: center;
    justify-content: space-between;
    padding: 8px 2px 8px 0;
    border-left: 1px solid #999;
`;
